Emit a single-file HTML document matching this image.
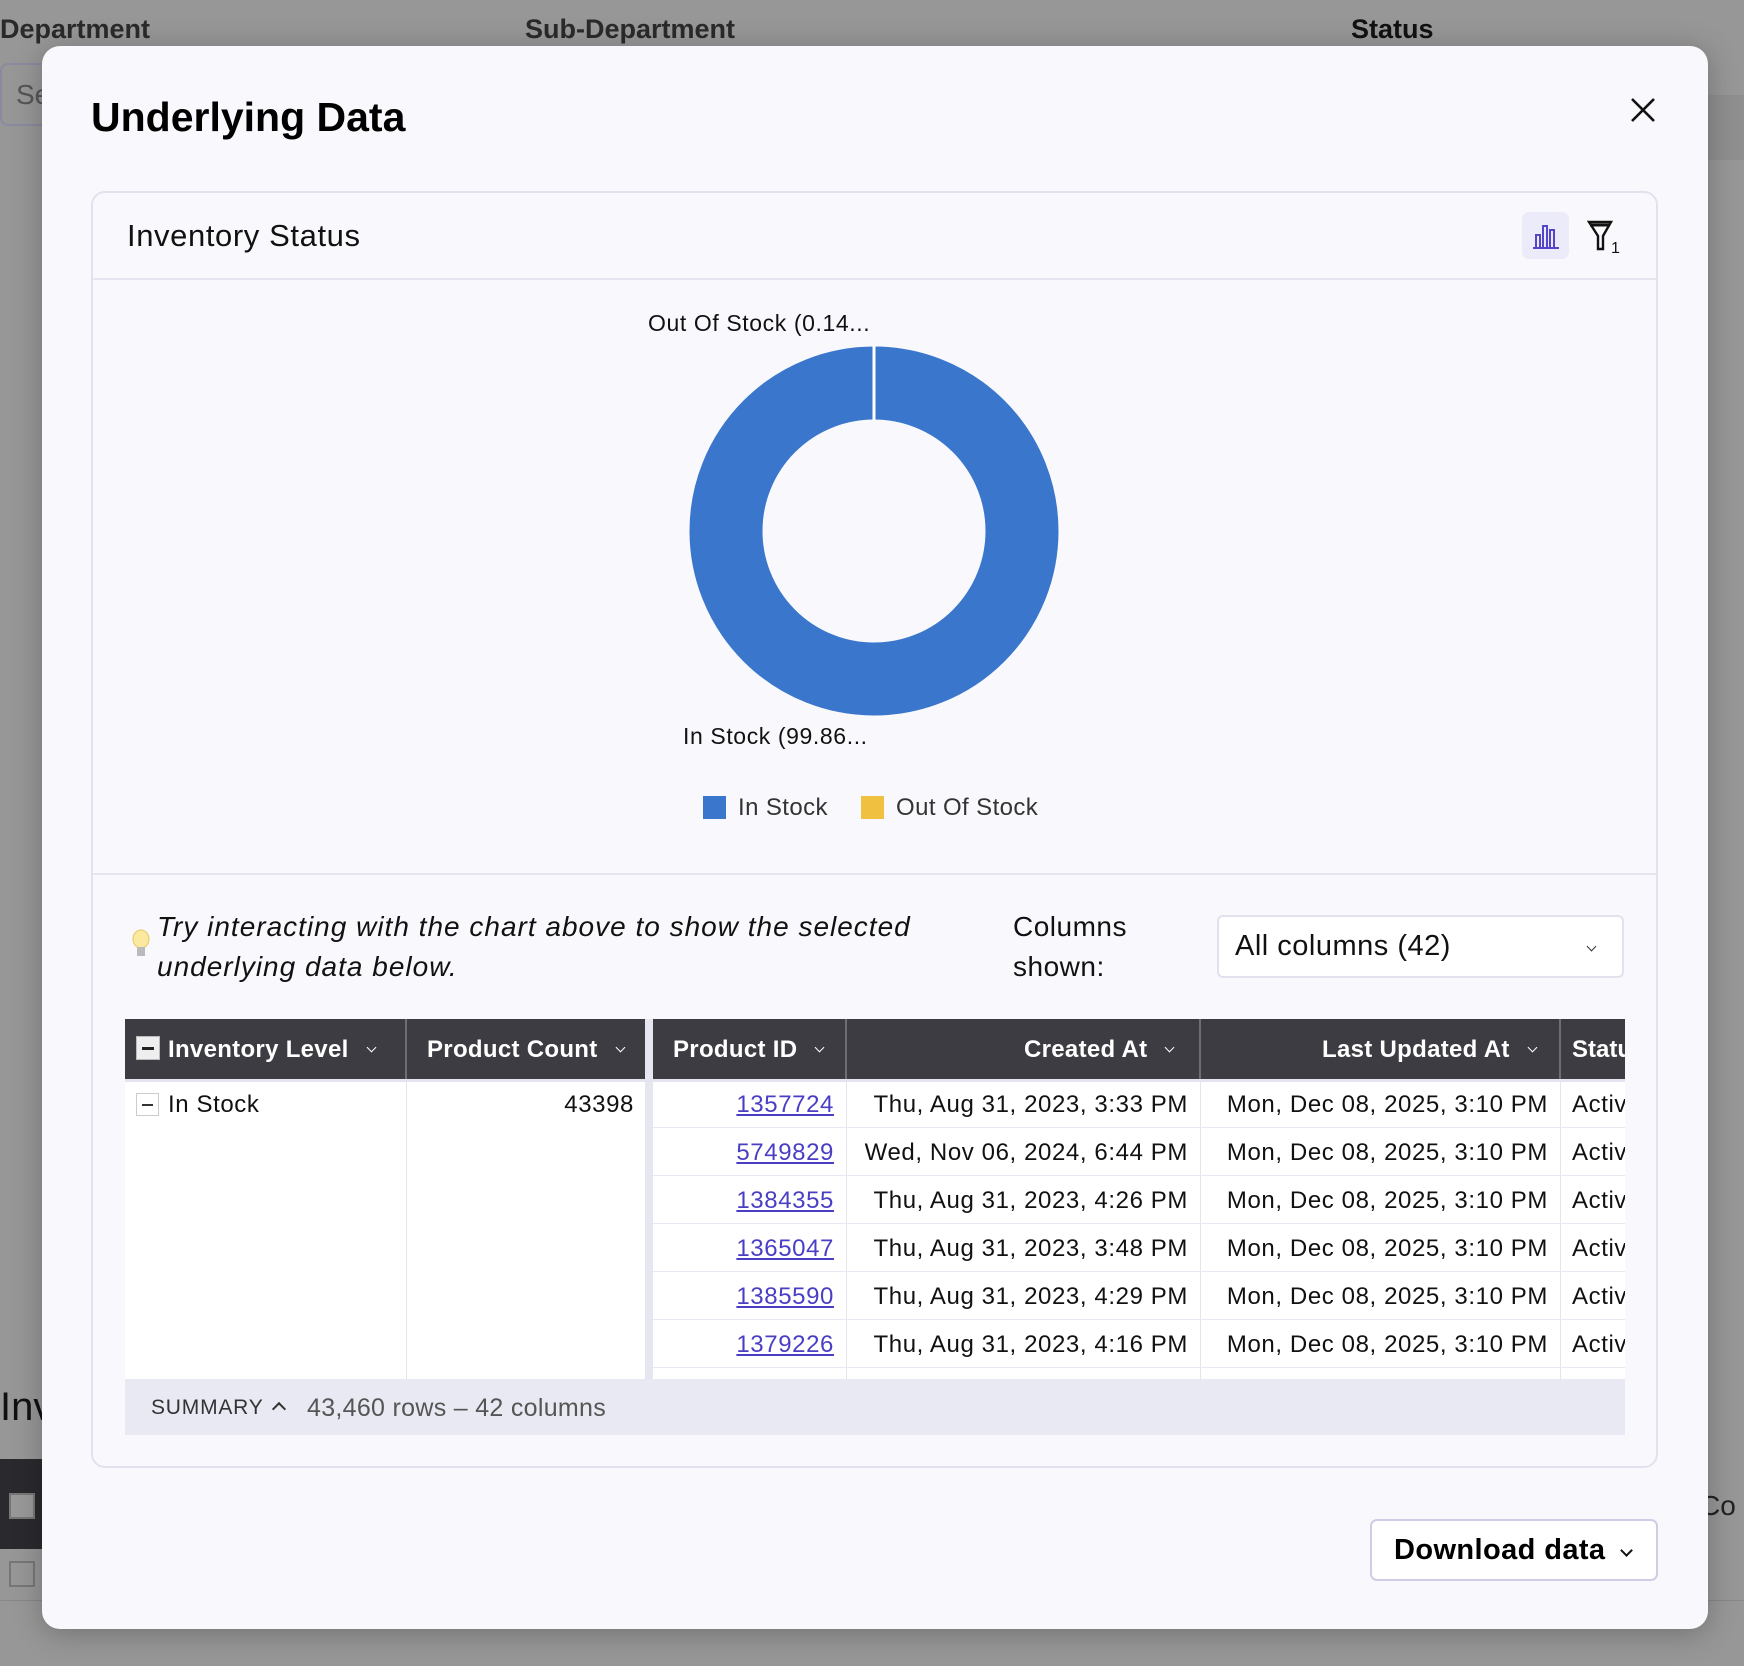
<!DOCTYPE html>
<html><head><meta charset="utf-8"><style>
*{box-sizing:border-box;margin:0;padding:0}
body{width:1744px;height:1666px;overflow:hidden;background:#979797;font-family:"Liberation Sans",sans-serif;position:relative;color:#111}
.a{position:absolute;white-space:nowrap}
.modal{position:absolute;left:42px;top:46px;width:1666px;height:1583px;background:#f9f9fd;border-radius:18px;box-shadow:0 4px 30px rgba(0,0,0,.25)}
.card{position:absolute;left:91px;top:191px;width:1567px;height:1277px;border:2px solid #e2e2ee;border-radius:14px}
.hd{background:#3d3c42;color:#fff;font-weight:bold;font-size:24px}
.cell{position:absolute;font-size:24px;color:#111;letter-spacing:.6px}
.lnk{color:#4a3fc4;text-decoration:underline}
.vl{position:absolute;width:1px;background:#e4e4ee}
.hl{position:absolute;height:1px;background:#e8e8f2}
.chev{display:inline-block;width:8px;height:8px;border-right:1.8px solid currentColor;border-bottom:1.8px solid currentColor;transform:rotate(45deg);vertical-align:middle;margin-top:-6px}
</style></head><body>
<div class="a" style="left:0;top:14px;font-size:27px;font-weight:bold;color:#2a2a2a">Department</div>
<div class="a" style="left:525px;top:14px;font-size:27px;font-weight:bold;color:#2a2a2a">Sub-Department</div>
<div class="a" style="left:1351px;top:14px;font-size:27px;font-weight:bold;color:#111">Status</div>
<div class="a" style="left:0;top:63px;width:60px;height:63px;border:2px solid #8a8aa0;border-radius:8px;font-size:28px;color:#555;padding:14px 14px">Se</div>
<div class="a" style="left:1700px;top:95px;width:44px;height:65px;background:#8f8f8f"></div>
<div class="a" style="left:0;top:1385px;font-size:40px;color:#111">Inv</div>
<div class="a" style="left:0;top:1459px;width:50px;height:90px;background:#2a2a2e"></div>
<div class="a" style="left:9px;top:1493px;width:26px;height:26px;border:2px solid #777;background:#999"></div>
<div class="a" style="left:9px;top:1561px;width:26px;height:26px;border:2px solid #777"></div>
<div class="a" style="left:1700px;top:1490px;font-size:28px;color:#222">Co</div>
<div class="a" style="left:0;top:1600px;width:1744px;height:1px;background:#888"></div>

<div class="modal"></div>
<div class="a" style="left:91px;top:94px;font-size:41px;font-weight:bold;color:#000">Underlying Data</div>
<svg class="a" style="left:1630px;top:97px" width="26" height="26" viewBox="0 0 26 26"><path d="M2 2L24 24M24 2L2 24" stroke="#111" stroke-width="2.6"/></svg>

<div class="card"></div>
<div class="a" style="left:93px;top:278px;width:1563px;height:2px;background:#e6e6f0"></div>
<div class="a" style="left:127px;top:218px;font-size:31px;color:#111;letter-spacing:.6px">Inventory Status</div>
<div class="a" style="left:1522px;top:212px;width:47px;height:47px;background:#ebebf9;border-radius:7px"></div>
<svg class="a" style="left:1530px;top:220px" width="32" height="32" viewBox="0 0 32 32" fill="none" stroke="#5545c9" stroke-width="2"><path d="M3 28H29M6 27V15H10V27M13 27V6H17V27M20 27V10H24V27"/></svg>
<svg class="a" style="left:1586px;top:218px" width="30" height="36" viewBox="0 0 30 36" fill="none" stroke="#111" stroke-width="2.4"><path d="M3 4H25L17 18V31H12V18Z"/><path d="M4 7H24" stroke-width="3"/></svg>
<div class="a" style="left:1611px;top:240px;font-size:16px">1</div>

<div class="a" style="left:648px;top:310px;font-size:23px;color:#111;letter-spacing:.6px">Out Of Stock (0.14...</div>
<svg class="a" style="left:689px;top:346px" width="370" height="370" viewBox="0 0 370 370"><circle cx="185" cy="185" r="148" fill="none" stroke="#3a76cc" stroke-width="73"/><line x1="185" y1="0" x2="185" y2="75" stroke="#fff" stroke-width="3"/></svg>
<div class="a" style="left:683px;top:723px;font-size:23px;color:#111;letter-spacing:.6px">In Stock (99.86...</div>
<div class="a" style="left:703px;top:796px;width:23px;height:23px;background:#3a76cc"></div>
<div class="a" style="left:738px;top:794px;font-size:24px;color:#333;letter-spacing:.4px">In Stock</div>
<div class="a" style="left:861px;top:796px;width:23px;height:23px;background:#f0c040"></div>
<div class="a" style="left:896px;top:794px;font-size:24px;color:#333;letter-spacing:.4px">Out Of Stock</div>
<div class="a" style="left:93px;top:873px;width:1563px;height:2px;background:#e6e6f0"></div>

<svg class="a" style="left:131px;top:928px" width="20" height="34" viewBox="0 0 20 34"><ellipse cx="10" cy="11" rx="8" ry="9" fill="#fbe9a0" stroke="#e8c860"/><rect x="6" y="19" width="8" height="9" fill="#bbb"/></svg>
<div class="a" style="left:157px;top:907px;font-size:28px;font-style:italic;line-height:40px;color:#111;letter-spacing:1px">Try interacting with the chart above to show the selected<br>underlying data below.</div>
<div class="a" style="left:1013px;top:907px;font-size:28px;line-height:40px;color:#111;letter-spacing:.5px">Columns<br>shown:</div>
<div class="a" style="left:1217px;top:915px;width:407px;height:63px;border:2px solid #e2e2ee;border-radius:6px;background:#fff"></div>
<div class="a" style="left:1235px;top:930px;font-size:29px;color:#111;letter-spacing:.5px">All columns (42)</div>
<div class="a" style="left:1588px;top:941px;color:#333"><span class="chev" style="width:7px;height:7px;border-width:1.5px"></span></div>

<div class="a" style="left:125px;top:1019px;width:1500px;height:360px;background:#fff"></div>
<div class="a hd" style="left:125px;top:1019px;width:1500px;height:60px"></div>
<div class="a" style="left:645px;top:1019px;width:8px;height:360px;background:#e6e6f0"></div>
<div class="a" style="left:405px;top:1019px;width:2px;height:60px;background:#6e6d75"></div>
<div class="a" style="left:845px;top:1019px;width:2px;height:60px;background:#6e6d75"></div>
<div class="a" style="left:1199px;top:1019px;width:2px;height:60px;background:#6e6d75"></div>
<div class="a" style="left:1559px;top:1019px;width:2px;height:60px;background:#6e6d75"></div>
<div class="vl" style="left:406px;top:1079px;height:300px"></div>
<div class="vl" style="left:846px;top:1079px;height:300px"></div>
<div class="vl" style="left:1200px;top:1079px;height:300px"></div>
<div class="vl" style="left:1560px;top:1079px;height:300px"></div>
<div class="a" style="left:136px;top:1036px;width:24px;height:24px;background:#eee;border:1px solid #bbb"></div>
<div class="a" style="left:142px;top:1047px;width:12px;height:2.5px;background:#222"></div>
<div class="a hd" style="left:168px;top:1036px;letter-spacing:.3px">Inventory Level <span class="chev" style="width:7px;height:7px;border-width:1.5px;margin-left:12px"></span></div>
<div class="a hd" style="left:427px;top:1036px;letter-spacing:.3px">Product Count <span class="chev" style="width:7px;height:7px;border-width:1.5px;margin-left:12px"></span></div>
<div class="a hd" style="left:673px;top:1036px;letter-spacing:.3px">Product ID <span class="chev" style="width:7px;height:7px;border-width:1.5px;margin-left:12px"></span></div>
<div class="a hd" style="left:1024px;top:1036px;letter-spacing:.3px">Created At <span class="chev" style="width:7px;height:7px;border-width:1.5px;margin-left:12px"></span></div>
<div class="a hd" style="left:1322px;top:1036px;letter-spacing:.3px">Last Updated At <span class="chev" style="width:7px;height:7px;border-width:1.5px;margin-left:12px"></span></div>
<div class="a hd" style="left:1572px;top:1036px;width:53px;overflow:hidden">Status</div>
<div class="a" style="left:125px;top:1079px;width:1500px;height:3px;background:#e4e4f0"></div>

<div class="a" style="left:136px;top:1093px;width:23px;height:23px;border:1px solid #ccc"></div>
<div class="a" style="left:142px;top:1104px;width:11px;height:2px;background:#333"></div>
<div class="cell" style="left:168px;top:1091px">In Stock</div>
<div class="cell" style="right:1110px;top:1091px">43398</div>

<div class="hl" style="left:653px;top:1127px;width:972px"></div>
<div class="hl" style="left:653px;top:1175px;width:972px"></div>
<div class="hl" style="left:653px;top:1223px;width:972px"></div>
<div class="hl" style="left:653px;top:1271px;width:972px"></div>
<div class="hl" style="left:653px;top:1319px;width:972px"></div>
<div class="hl" style="left:653px;top:1367px;width:972px"></div>

<div class="cell lnk" style="right:910px;top:1091px">1357724</div>
<div class="cell" style="right:556px;top:1091px">Thu, Aug 31, 2023, 3:33 PM</div>
<div class="cell" style="right:196px;top:1091px">Mon, Dec 08, 2025, 3:10 PM</div>
<div class="cell" style="left:1572px;top:1091px;width:53px;overflow:hidden">Active</div>

<div class="cell lnk" style="right:910px;top:1139px">5749829</div>
<div class="cell" style="right:556px;top:1139px">Wed, Nov 06, 2024, 6:44 PM</div>
<div class="cell" style="right:196px;top:1139px">Mon, Dec 08, 2025, 3:10 PM</div>
<div class="cell" style="left:1572px;top:1139px;width:53px;overflow:hidden">Active</div>

<div class="cell lnk" style="right:910px;top:1187px">1384355</div>
<div class="cell" style="right:556px;top:1187px">Thu, Aug 31, 2023, 4:26 PM</div>
<div class="cell" style="right:196px;top:1187px">Mon, Dec 08, 2025, 3:10 PM</div>
<div class="cell" style="left:1572px;top:1187px;width:53px;overflow:hidden">Active</div>

<div class="cell lnk" style="right:910px;top:1235px">1365047</div>
<div class="cell" style="right:556px;top:1235px">Thu, Aug 31, 2023, 3:48 PM</div>
<div class="cell" style="right:196px;top:1235px">Mon, Dec 08, 2025, 3:10 PM</div>
<div class="cell" style="left:1572px;top:1235px;width:53px;overflow:hidden">Active</div>

<div class="cell lnk" style="right:910px;top:1283px">1385590</div>
<div class="cell" style="right:556px;top:1283px">Thu, Aug 31, 2023, 4:29 PM</div>
<div class="cell" style="right:196px;top:1283px">Mon, Dec 08, 2025, 3:10 PM</div>
<div class="cell" style="left:1572px;top:1283px;width:53px;overflow:hidden">Active</div>

<div class="cell lnk" style="right:910px;top:1331px">1379226</div>
<div class="cell" style="right:556px;top:1331px">Thu, Aug 31, 2023, 4:16 PM</div>
<div class="cell" style="right:196px;top:1331px">Mon, Dec 08, 2025, 3:10 PM</div>
<div class="cell" style="left:1572px;top:1331px;width:53px;overflow:hidden">Active</div>

<div class="a" style="left:125px;top:1379px;width:1500px;height:56px;background:#e9e9f3"></div>
<div class="a" style="left:151px;top:1396px;font-size:21px;color:#333;letter-spacing:.8px">SUMMARY</div>
<div class="a" style="left:274px;top:1403px;color:#333"><span class="chev" style="transform:rotate(-135deg);width:10px;height:10px;border-width:2px"></span></div>
<div class="a" style="left:307px;top:1394px;font-size:25px;color:#555;letter-spacing:.3px">43,460 rows – 42 columns</div>

<div class="a" style="left:1370px;top:1519px;width:288px;height:62px;border:2px solid #cfcde6;border-radius:7px;background:#fff"></div>
<div class="a" style="left:1394px;top:1534px;font-size:29px;font-weight:bold;color:#000;letter-spacing:.4px">Download data</div>
<div class="a" style="left:1622px;top:1545px;color:#111"><span class="chev" style="width:9px;height:9px;border-width:2.2px"></span></div>
</body></html>
